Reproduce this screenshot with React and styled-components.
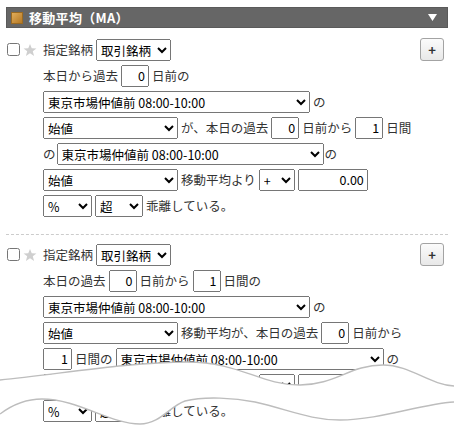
import React from "react"
import styled, { createGlobalStyle } from "styled-components"

const GlobalStyle = createGlobalStyle`
  body {
    margin: 0;
    background: #fff;
    font-family: "Noto Sans CJK JP", "Noto Sans", sans-serif;
    font-size: 12.5px;
    color: #333;
  }
  select, input, button {
    font-family: "Noto Sans CJK JP", "Noto Sans", sans-serif;
    font-size: 12.5px;
  }
`

const Page = styled.div`
  position: relative;
  width: 454px;
  height: 428px;
  overflow: hidden;
`

const Panel = styled.div`
  margin: 7px 6px 0;
`

const Header = styled.div`
  display: flex;
  align-items: center;
  height: 21px;
  padding: 0 10px 0 4px;
  background: #666;
  border: 1px solid #5a5a5a;
  box-sizing: border-box;
  color: #fff;
  font-weight: bold;
  font-size: 13px;
`

const HeaderIcon = styled.span`
  width: 12px;
  height: 12px;
  margin-right: 6px;
  background: linear-gradient(135deg, #e2ad5a, #b47824);
  border: 1px solid #9a6a22;
  box-sizing: border-box;
`

const HeaderTitle = styled.span`
  flex: 1;
  letter-spacing: 0.3px;
`

const Block = styled.div`
  padding: ${p => p.$first ? "10px" : "8px"} 0 14px 1px;
  border-bottom: ${p => p.$last ? "none" : "1px dashed #ccc"};
`

const Row = styled.div`
  display: flex;
  align-items: center;
  gap: ${p => p.$gap || 3}px;
  height: 23px;
  margin-bottom: 3px;
  padding-left: ${p => p.$indent ? "36px" : "0"};
  white-space: nowrap;
`

const Check = styled.input.attrs({ type: "checkbox" })`
  width: 13px;
  height: 13px;
  margin: 0;
`

const Star = styled.svg`
  width: 14px;
  height: 14px;
  margin-right: 3px;
`

const Select = styled.select`
  width: ${p => p.$w}px;
  height: 22px;
  margin: 0;
  box-sizing: border-box;
  color: #000;
`

const NumInput = styled.input`
  width: ${p => p.$w || 28}px;
  height: 22px;
  margin: 0;
  padding: 1px 2px;
  box-sizing: border-box;
  text-align: right;
  color: #000;
`

const AddButton = styled.button`
  margin-left: auto;
  margin-right: 4px;
  width: 24px;
  height: 23px;
  padding: 0;
  background: linear-gradient(#fbfbfb, #e8e8e8);
  border: 1px solid #a3a3a3;
  border-radius: 3px;
  color: #333;
  font-weight: bold;
  font-size: 13px;
`

const Tear = styled.svg`
  position: absolute;
  left: 0;
  top: 355px;
  width: 454px;
  height: 73px;
`

const TOP = "M0,380 C60,374 130,362 187,362 C240,362 260,385 300,385 C335,385 350,365 383,365 C410,365 430,385 454,386"
const BOTTOM = "M0,414 C12,405 25,399 42,399 C78,399 110,424 140,424 C160,424 170,406 185,401 C205,396 235,398 255,402 C290,410 310,420 340,420 C380,420 420,404 454,402"
const BOTTOM_REV = "L454,402 C420,404 380,420 340,420 C310,420 290,410 255,402 C235,398 205,396 185,401 C170,406 160,424 140,424 C110,424 78,399 42,399 C25,399 12,405 0,414 Z"

const MARKET = "東京市場仲値前 08:00-10:00"

function StarIcon() {
  return (
    <Star viewBox="0 0 24 24">
      <polygon
        points="12,1.5 15,9 23,9.3 16.8,14.3 19,22.2 12,17.6 5,22.2 7.2,14.3 1,9.3 9,9"
        fill="#cfcfcf"
      />
    </Star>
  )
}

function TopRow() {
  return (
    <Row>
      <Check />
      <StarIcon />
      <span>指定銘柄</span>
      <Select $w={75} defaultValue="a">
        <option value="a">取引銘柄</option>
      </Select>
      <AddButton>+</AddButton>
    </Row>
  )
}

function PriceSelect() {
  return (
    <Select $w={135}>
      <option>始値</option>
    </Select>
  )
}

function MarketSelect({ w = 267 }) {
  return (
    <Select $w={w}>
      <option>{MARKET}</option>
    </Select>
  )
}

function DeviationRows() {
  return (
    <>
      <Row $indent>
        <PriceSelect />
        <span>移動平均より</span>
        <Select $w={36}>
          <option>+</option>
        </Select>
        <NumInput $w={70} defaultValue="0.00" />
      </Row>
      <Row $indent>
        <Select $w={49}>
          <option>%</option>
        </Select>
        <Select $w={48}>
          <option>超</option>
        </Select>
        <span>乖離している。</span>
      </Row>
    </>
  )
}

function FirstBlock() {
  return (
    <Block $first>
      <TopRow />
      <Row $indent>
        <span>本日から過去</span>
        <NumInput defaultValue="0" />
        <span>日前の</span>
      </Row>
      <Row $indent>
        <MarketSelect />
        <span>の</span>
      </Row>
      <Row $indent>
        <PriceSelect />
        <span>が、本日の過去</span>
        <NumInput defaultValue="0" />
        <span>日前から</span>
        <NumInput defaultValue="1" />
        <span>日間</span>
      </Row>
      <Row $indent $gap={1}>
        <span>の</span>
        <MarketSelect />
        <span>の</span>
      </Row>
      <DeviationRows />
    </Block>
  )
}

function SecondBlock() {
  return (
    <Block $last>
      <TopRow />
      <Row $indent>
        <span>本日の過去</span>
        <NumInput defaultValue="0" />
        <span>日前から</span>
        <NumInput defaultValue="1" />
        <span>日間の</span>
      </Row>
      <Row $indent>
        <MarketSelect />
        <span>の</span>
      </Row>
      <Row $indent>
        <PriceSelect />
        <span>移動平均が、本日の過去</span>
        <NumInput defaultValue="0" />
        <span>日前から</span>
      </Row>
      <Row $indent>
        <NumInput $w={29} defaultValue="1" />
        <span>日間の</span>
        <MarketSelect w={268} />
        <span>の</span>
      </Row>
      <DeviationRows />
    </Block>
  )
}

export default function App() {
  return (
    <Page>
      <GlobalStyle />
      <Panel>
        <Header>
          <HeaderIcon />
          <HeaderTitle>移動平均（MA）</HeaderTitle>
          <svg width="9" height="7" viewBox="0 0 9 7">
            <polygon points="0,0 9,0 4.5,7" fill="#fff" />
          </svg>
        </Header>
        <FirstBlock />
        <SecondBlock />
      </Panel>
      <Tear viewBox="0 355 454 73">
        <path d={TOP + " " + BOTTOM_REV} fill="#fff" />
        <path d={TOP} fill="none" stroke="#bdbdbd" strokeWidth="1.4" />
        <path d={BOTTOM} fill="none" stroke="#bdbdbd" strokeWidth="1.4" />
      </Tear>
    </Page>
  )
}
